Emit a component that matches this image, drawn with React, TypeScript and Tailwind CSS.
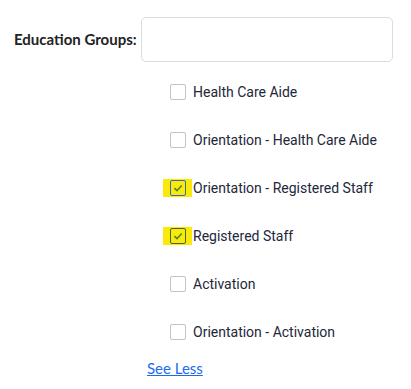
import { useState } from 'react';

const groups = [
    { label: 'Health Care Aide', checked: false },
    { label: 'Orientation - Health Care Aide', checked: false },
    { label: 'Orientation - Registered Staff', checked: true, focused: true },
    { label: 'Registered Staff', checked: true },
    { label: 'Activation', checked: false },
    { label: 'Orientation - Activation', checked: false },
];

function Check({ checked, focused }: { checked: boolean; focused?: boolean }) {
    const box = (
        <span
            className={`flex h-[16px] w-[16px] items-center justify-center rounded-[2px] border ${
                checked ? (focused ? 'border-[#2f6fb5]' : 'border-[#3d6b1f]') : 'border-[#c4c4c4] bg-white'
            }`}
        >
            {checked && (
                <svg viewBox="0 0 12 12" className="h-[12px] w-[12px]">
                    <path d="M2.4 6.2 L5 8.7 L9.7 3.5" fill="none" stroke="#4a8a1c" strokeWidth="1.6" />
                </svg>
            )}
        </span>
    );
    if (!checked) return <span className="flex w-[16px] items-center">{box}</span>;
    return (
        <span className="-ml-[7px] -mr-[6px] flex h-[18px] w-[29px] items-center justify-center bg-[#fbe90a]">
            {box}
        </span>
    );
}

export default function App() {
    const [items] = useState(groups);
    return (
        <div className="min-h-screen bg-white pt-[17px] text-[14px] text-[#23273a]" style={{ fontFamily: 'Roboto, sans-serif' }}>
            <div className="flex items-center">
                <label className="ml-[14px] mr-[4px] w-[123px] text-[15px] font-bold text-[#222]" style={{ fontFamily: 'Lato, sans-serif' }}>
                    Education Groups:
                </label>
                <div className="h-[45px] w-[252px] rounded-[5px] border border-[#dcdcdc] bg-white" />
            </div>
            <ul className="ml-[170px] mt-[22px] flex flex-col gap-[32px]">
                {items.map((g) => (
                    <li key={g.label} className="flex h-[16px] items-center gap-[7px] leading-none">
                        <Check checked={g.checked} focused={g.focused} />
                        <span>{g.label}</span>
                    </li>
                ))}
            </ul>
            <a href="#" className="ml-[147px] mt-[17px] inline-block text-[15px] text-[#1a6bf0] underline" style={{ fontFamily: 'Lato, sans-serif' }}>
                See Less
            </a>
        </div>
    );
}
